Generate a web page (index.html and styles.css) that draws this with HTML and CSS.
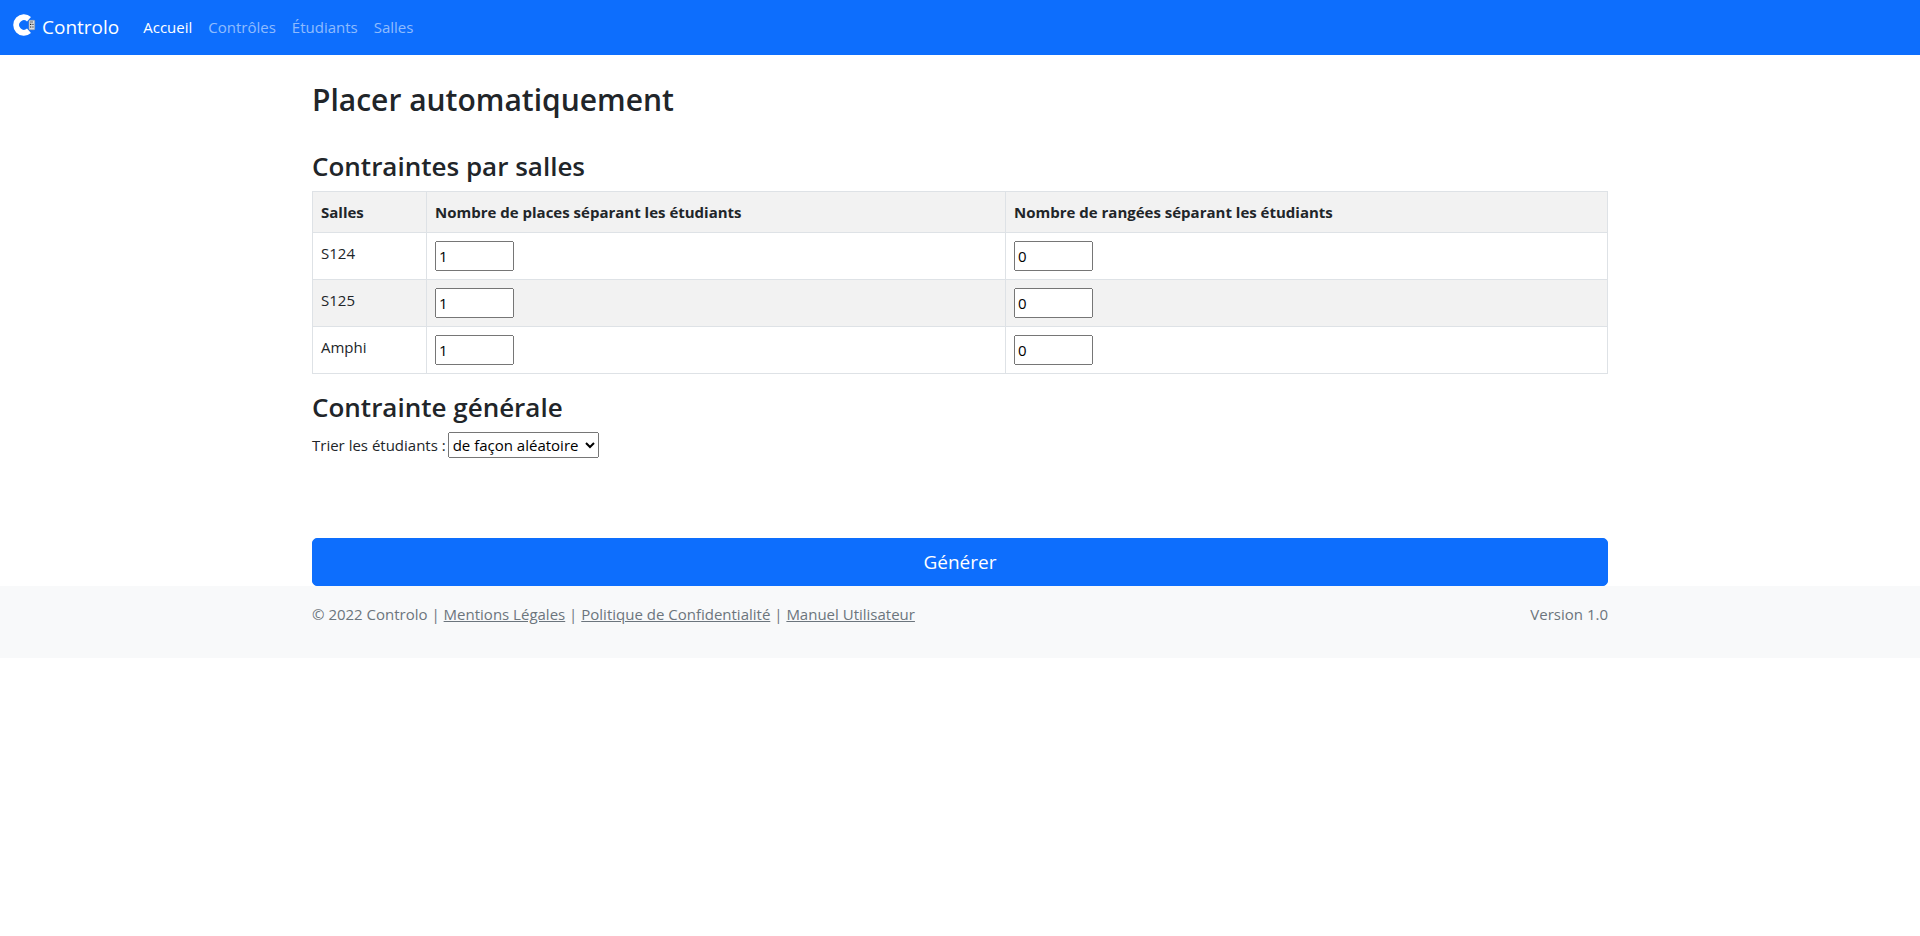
FILE: index.html
```html
<!DOCTYPE html>
<html lang="fr">
<head>
<meta charset="utf-8">
<meta name="viewport" content="width=device-width, initial-scale=1">
<title>Controlo</title>
<link rel="stylesheet" href="styles.css">
</head>
<body>
<nav class="navbar">
  <a class="brand" href="#">
    <svg class="logo" viewBox="0 0 24 24" aria-hidden="true">
      <path d="M17 6.2A7.7 7.7 0 1 0 17 17.8" fill="none" stroke="#fff" stroke-width="6"/>
      <rect x="17" y="7.3" width="5.7" height="9.4" rx=".6" fill="#d9dbde" stroke="#9a9da3" stroke-width=".6"/>
      <path d="M18 9h3M19.8 11.4h2M19.8 14h2" stroke="#55585e" stroke-width=".9"/>
      <path d="M18 11.4h1.2M18 14h1.2" stroke="#222" stroke-width="1.2"/>
    </svg>
    <span>Controlo</span>
  </a>
  <ul class="nav">
    <li><a class="nav-link active" href="#">Accueil</a></li>
    <li><a class="nav-link" href="#">Contrôles</a></li>
    <li><a class="nav-link" href="#">Étudiants</a></li>
    <li><a class="nav-link" href="#">Salles</a></li>
  </ul>
</nav>
<main class="container">
  <h1 class="page-title">Placer automatiquement</h1>
  <form>
    <h2 class="section-title">Contraintes par salles</h2>
    <table class="rooms">
      <thead>
        <tr><th class="col-room" scope="col">Salles</th><th class="col-seats" scope="col">Nombre de places séparant les étudiants</th><th scope="col">Nombre de rangées séparant les étudiants</th></tr>
      </thead>
      <tbody>
        <tr>
          <td>S124</td>
          <td><input class="number" type="number" value="1" aria-label="Places séparant les étudiants, S124"></td>
          <td><input class="number" type="number" value="0" aria-label="Rangées séparant les étudiants, S124"></td>
        </tr>
        <tr>
          <td>S125</td>
          <td><input class="number" type="number" value="1" aria-label="Places séparant les étudiants, S125"></td>
          <td><input class="number" type="number" value="0" aria-label="Rangées séparant les étudiants, S125"></td>
        </tr>
        <tr>
          <td>Amphi</td>
          <td><input class="number" type="number" value="1" aria-label="Places séparant les étudiants, Amphi"></td>
          <td><input class="number" type="number" value="0" aria-label="Rangées séparant les étudiants, Amphi"></td>
        </tr>
      </tbody>
    </table>
    <h2 class="section-title">Contrainte générale</h2>
    <div class="sort">
      <label for="tri">Trier les étudiants :</label>
      <select id="tri" class="select"><option>de façon aléatoire</option></select>
    </div>
    <button class="submit" type="submit">Générer</button>
  </form>
</main>
<footer class="footer">
  <div class="container footer-row">
    <p class="legal">© 2022 Controlo | <a href="#">Mentions Légales</a> | <a href="#">Politique de Confidentialité</a> | <a href="#">Manuel Utilisateur</a></p>
    <p class="legal">Version 1.0</p>
  </div>
</footer>
</body>
</html>
```
FILE: styles.css
```css
*, *::before, *::after { box-sizing: border-box; }

body {
  margin: 0;
  background: #fff;
  color: #212529;
  font: 400 15px/24px "Segoe UI", "Open Sans", "Noto Sans", sans-serif;
}

.navbar {
  display: flex;
  align-items: center;
  padding: 7px 12px 8px;
  background: #0d6efd;
}

.brand {
  display: flex;
  align-items: center;
  gap: 6px;
  margin-right: 16px;
  color: #fff;
  font-size: 19px;
  line-height: 30px;
  text-decoration: none;
}

.logo {
  width: 24px;
  height: 24px;
  margin-bottom: 4px;
}

.nav {
  display: flex;
  margin: 0;
  padding: 0;
  list-style: none;
}

.nav-link {
  display: block;
  padding: 8px;
  color: rgba(255, 255, 255, 0.55);
  text-decoration: none;
}

.nav-link.active { color: #fff; }

.container {
  width: 100%;
  max-width: 1320px;
  margin: 0 auto;
  padding: 0 12px;
}

.page-title,
.section-title {
  margin: 0 0 8px;
  font-weight: 600;
}

.page-title {
  margin: 24px 0 28px;
  font-size: 30px;
  line-height: 42px;
}

.section-title {
  font-size: 26px;
  line-height: 34px;
}

.rooms {
  width: 100%;
  margin-bottom: 16px;
  border-collapse: collapse;
}

.rooms th,
.rooms td {
  padding: 8px;
  border: 1px solid #dee2e6;
  text-align: left;
  vertical-align: top;
}

.rooms th { font-weight: 700; }
.rooms thead tr,
.rooms tbody tr:nth-child(even) { background: #f2f2f2; }

.col-room { width: 114px; }
.col-seats { width: 579px; }

.number {
  display: block;
  width: 79px;
  height: 30px;
  margin: 0;
  font: inherit;
}

.sort {
  display: flex;
  align-items: center;
  gap: 2px;
  margin-bottom: 80px;
}

.select {
  width: 151px;
  height: 26px;
  font: inherit;
}

.submit {
  display: block;
  width: 100%;
  padding: 8px 16px;
  border: 1px solid #0d6efd;
  border-radius: 5px;
  background: #0d6efd;
  color: #fff;
  font: inherit;
  font-size: 19px;
  line-height: 30px;
}

.footer {
  padding: 16px 0;
  background: #f8f9fa;
  color: #6c757d;
}

.footer-row {
  display: flex;
  justify-content: space-between;
}

.legal { margin: 0 0 16px; }
.legal a { color: inherit; }
```
